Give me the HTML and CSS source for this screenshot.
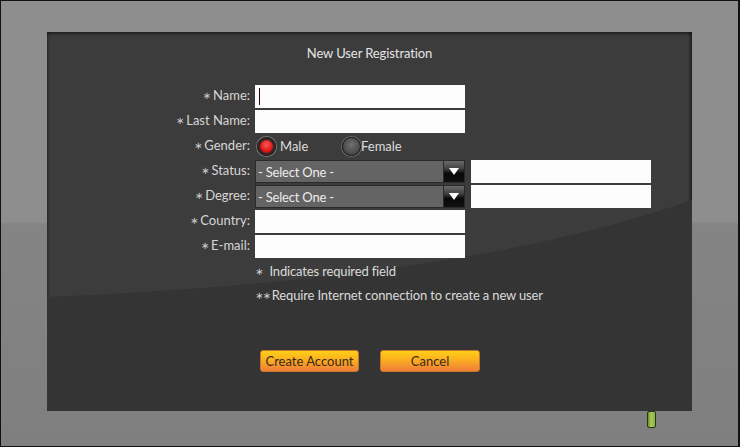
FILE: index.html
```html
<!DOCTYPE html>
<html>
<head>
<meta charset="utf-8">
<link rel="stylesheet" href="styles.css">
</head>
<body>
<div class="frame">
  <div class="panel">
    <div class="panel-bg"></div>
    <h1 class="title">New User Registration</h1>
    <div class="form">
      <div class="row">
        <label class="lbl"><span class="ast">∗</span>Name:</label>
        <div class="input w210"><span class="caret"></span></div>
      </div>
      <div class="row">
        <label class="lbl"><span class="ast">∗</span>Last Name:</label>
        <div class="input w210"></div>
      </div>
      <div class="row">
        <label class="lbl"><span class="ast">∗</span>Gender:</label>
        <div class="radios">
          <div class="opt opt-male"><span class="radio on"></span><span class="opt-text">Male</span></div>
          <div class="opt opt-female"><span class="radio"></span><span class="opt-text">Female</span></div>
        </div>
      </div>
      <div class="row">
        <label class="lbl"><span class="ast">∗</span>Status:</label>
        <div class="select"><span class="select-text">- Select One -</span><span class="drop"><span class="tri"></span></span></div>
        <div class="input w180 extra"></div>
      </div>
      <div class="row">
        <label class="lbl"><span class="ast">∗</span>Degree:</label>
        <div class="select"><span class="select-text">- Select One -</span><span class="drop"><span class="tri"></span></span></div>
        <div class="input w180 extra"></div>
      </div>
      <div class="row">
        <label class="lbl"><span class="ast">∗</span>Country:</label>
        <div class="input w210"></div>
      </div>
      <div class="row">
        <label class="lbl"><span class="ast">∗</span>E-mail:</label>
        <div class="input w210"></div>
      </div>
    </div>
    <p class="note note1"><span class="ast">∗</span> Indicates required field</p>
    <p class="note note2"><span class="ast">∗∗</span>Require Internet connection to create a new user</p>
    <div class="buttons">
      <button class="btn btn-create">Create Account</button>
      <button class="btn btn-cancel">Cancel</button>
    </div>
  </div>
  <div class="footer"><span class="led"></span></div>
</div>
</body>
</html>
```

FILE: styles.css
```css
* { box-sizing: border-box; }
html, body { margin: 0; padding: 0; }
body { background: #000; font-family: Lato, "Open Sans", sans-serif; }

.frame {
  width: 740px;
  height: 447px;
  border: 1px solid #111;
  border-right-width: 2px;
  background: linear-gradient(to bottom, #8e8e8e 0, #8e8e8e 221px, #888 222px, #848484 223px, #7f7f7f 446px);
  padding: 31px 0 0 46px;
  overflow: hidden;
}

.panel {
  position: relative;
  width: 645px;
  height: 379px;
  background: #3c3c3c;
  padding-top: 13px;
  box-shadow: inset 0 3px 3px -1px rgba(0,0,0,0.45), inset -4px 0 3px -2px rgba(0,0,0,0.45), inset 3px 0 3px -2px rgba(0,0,0,0.3);
}
.panel-bg {
  position: absolute;
  left: 0; top: 0; right: 0; bottom: 0;
  background: #343434;
  clip-path: path('M0 265 Q 420 248 645 168 L645 379 L0 379 Z');
  z-index: 0;
}
.panel > *:not(.panel-bg) { position: relative; z-index: 1; }

.title {
  margin: 0;
  font-size: 13px;
  font-weight: normal;
  line-height: 16px;
  color: #e4e4e4;
  text-align: center;
  letter-spacing: -0.1px;
}

.form {
  margin-top: 24px;
  display: flex;
  flex-direction: column;
  gap: 2px;
}
.row {
  display: flex;
  align-items: center;
  height: 23px;
}
.lbl {
  width: 203px;
  text-align: right;
  font-size: 13px;
  line-height: 16px;
  color: #d6d6d6;
  margin-right: 5px;
  white-space: nowrap;
  position: relative;
  top: -1px;
}
.ast {
  font-family: "DejaVu Sans", sans-serif;
  font-size: 10px;
  color: #cfcfcf;
  margin-right: 2px;
  position: relative;
  top: -1px;
}

.input {
  height: 23px;
  background: #fcfcfc;
  position: relative;
}
.w210 { width: 210px; }
.w180 { width: 180px; }
.extra { margin-left: 6px; }
.caret {
  position: absolute;
  left: 4px;
  top: 3px;
  width: 1px;
  height: 17px;
  background: #3a0000;
}

.radios { display: flex; align-items: center; }
.opt { display: flex; align-items: center; font-size: 13px; color: #dcdcdc; }
.opt-text { position: relative; top: -1px; }
.opt-male { width: 85px; margin-left: 2px; gap: 4px; }
.opt-female { gap: 0; }
.radio {
  width: 19px;
  height: 19px;
  border-radius: 50%;
  border: 1px solid #1a1a1a;
  background: radial-gradient(circle at 50% 40%, #707070 0, #505050 55%, #3a3a3a 100%);
  box-shadow: 0 0 0 1px #6a6a6a;
}
.radio.on {
  background: radial-gradient(circle at 50% 40%, #ff5a5a 0, #e01818 45%, #8a0000 100%);
  box-shadow: 0 0 0 1px #7a7a7a, inset 0 0 0 2px #2a2a2a;
}

.select {
  width: 210px;
  height: 23px;
  background: #646464;
  border: 1px solid #2a2a2a;
  display: flex;
  align-items: center;
  justify-content: space-between;
}
.select-text {
  font-size: 13px;
  color: #ececec;
  padding-left: 2px;
  letter-spacing: -0.2px;
}
.drop {
  width: 21px;
  height: 21px;
  background: linear-gradient(to bottom, #6a6a6a 0, #444 35%, #080808 60%, #111 100%);
  border-left: 1px solid #2a2a2a;
  display: flex;
  align-items: center;
  justify-content: center;
}
.tri {
  width: 0; height: 0;
  border-left: 5px solid transparent;
  border-right: 5px solid transparent;
  border-top: 7px solid #fff;
}

.note {
  margin: 0;
  padding-left: 208px;
  font-size: 13px;
  line-height: 16px;
  color: #dadada;
  letter-spacing: -0.15px;
}
.note .ast { margin-right: 3px; }
.note1 { margin-top: 5px; }
.note2 { margin-top: 6px; }
.note2 .ast { margin-right: 2px; letter-spacing: -1px; }

.buttons {
  margin-top: 45px;
  padding-left: 213px;
  display: flex;
  gap: 21px;
}
.btn {
  height: 22px;
  border: 1px solid #c4782c;
  border-radius: 3px;
  background: linear-gradient(to bottom, #ffcf18 0, #fbb21e 40%, #f07d3a 100%);
  color: #3a2a18;
  font-family: Lato, "Open Sans", sans-serif;
  font-size: 13px;
  padding: 0;
  line-height: 20px;
}
.btn-create { width: 99px; }
.btn-cancel { width: 100px; }

.footer { padding-left: 600px; height: 20px; }
.led {
  display: block;
  width: 9px;
  height: 17px;
  border: 1px solid #2a3418;
  border-radius: 2px;
  background: linear-gradient(to right, #6c8c2c 0, #a6cc5a 45%, #8cb040 100%);
}
```
